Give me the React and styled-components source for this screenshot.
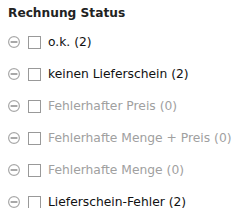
import React from 'react';
import styled, { createGlobalStyle } from 'styled-components';

const GlobalStyle = createGlobalStyle`
  body {
    margin: 0;
    background: #fff;
    font-family: Tahoma, "DejaVu Sans", Verdana, sans-serif;
  }
`

const Panel = styled.div`
  padding: 5px 8px 0 8px;
`

const Title = styled.div`
  font-weight: bold;
  font-size: 12.2px;
  color: #222;
  line-height: 16px;
  margin-bottom: 15px;
`

const List = styled.div`
  display: flex;
  flex-direction: column;
  gap: 20px;
`

const Row = styled.div`
  display: flex;
  align-items: center;
  height: 12px;
  color: ${props => props.disabled ? '#a0a0a0' : '#111'};
  font-size: 12.3px;

  svg {
    flex: none;
  }
`

const Box = styled.span`
  width: 11px;
  height: 11px;
  border: 1px solid #999;
  background: #fff;
  margin-left: 8px;
  margin-right: 7px;
  flex: none;
`

const Label = styled.span`
  white-space: nowrap;
  line-height: 16px;
`

const MinusIcon = () => (
  <svg width="12" height="12" viewBox="0 0 12 12">
    <circle cx="6" cy="6" r="5.4" fill="none" stroke="#a8a8a8" strokeWidth="1.2" />
    <rect x="2.6" y="5" width="6.8" height="2" fill="#a8a8a8" />
  </svg>
)

const items = [
  { name: 'o.k.', count: 2 },
  { name: 'keinen Lieferschein', count: 2 },
  { name: 'Fehlerhafter Preis', count: 0 },
  { name: 'Fehlerhafte Menge + Preis', count: 0 },
  { name: 'Fehlerhafte Menge', count: 0 },
  { name: 'Lieferschein-Fehler', count: 2 },
]

const App = () => {
  return (
    <Panel>
      <GlobalStyle />
      <Title>Rechnung Status</Title>
      <List>
        {items.map((item) => (
          <Row key={item.name} disabled={item.count === 0}>
            <MinusIcon />
            <Box />
            <Label>{item.name} ({item.count})</Label>
          </Row>
        ))}
      </List>
    </Panel>
  )
}

export default App;
